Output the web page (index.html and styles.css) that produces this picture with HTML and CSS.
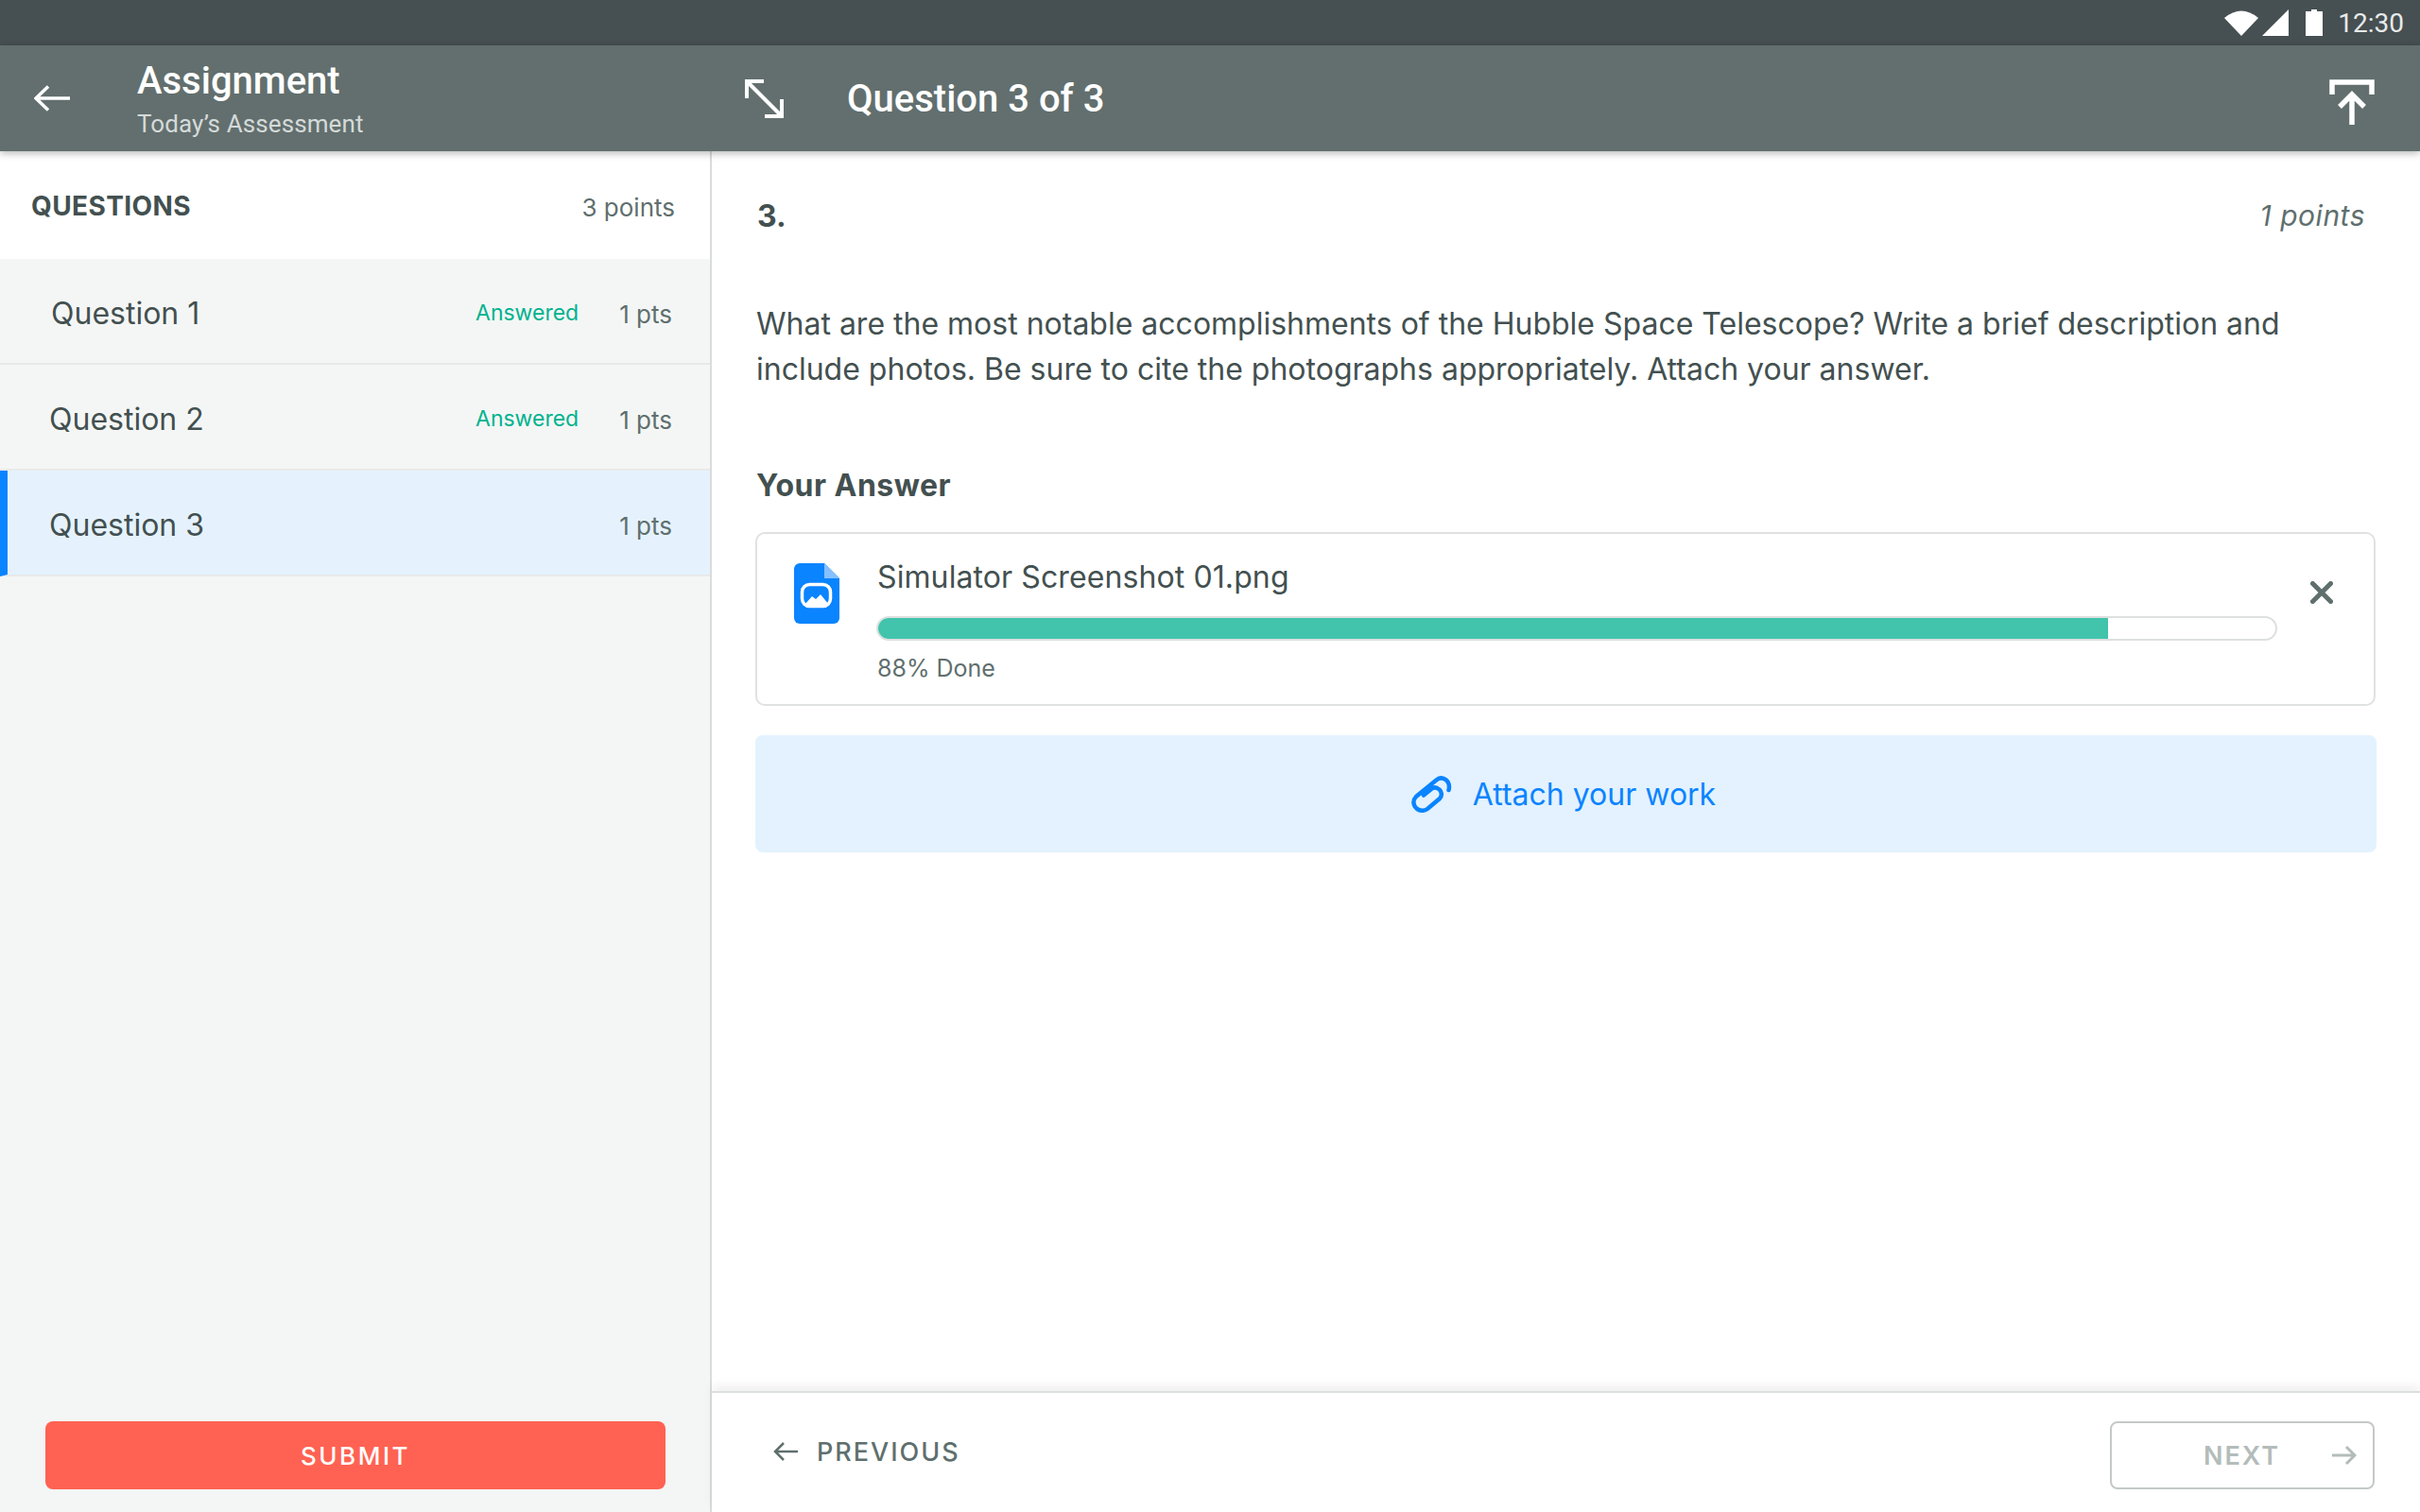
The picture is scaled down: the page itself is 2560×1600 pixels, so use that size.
FILE: index.html
```html
<!DOCTYPE html>
<html lang="en">
<head>
    <meta charset="UTF-8">
    <title>Assignment</title>
    <link rel="stylesheet" href="styles.css">
</head>
<body>
    <div class="status-bar">
        <svg class="st-wifi" width="36" height="28" viewBox="0 0 36 28"><path d="M0 9 Q18 -6 36 9 L18 28Z" fill="#fff"/></svg>
        <svg class="st-signal" width="28" height="28" viewBox="0 0 28 28"><path d="M0 28 L28 0 V28Z" fill="#fff"/></svg>
        <svg class="st-battery" width="18" height="28" viewBox="0 0 18 28"><path d="M0 2 H6 V0 H12 V2 H18 V28 H0Z" fill="#fff"/></svg>
        <span class="st-time">12:30</span>
    </div>
    <header class="app-bar">
        <div class="bar-left">
            <svg class="back" width="38" height="28" viewBox="0 0 38 28"><path d="M38 14 H3 M15 1.500 L2 14 L15 26.500" fill="none" stroke="#fff" stroke-width="3.500"/></svg>
            <div class="bar-titles">
                <div class="bar-title">Assignment</div>
                <div class="bar-sub">Today’s Assessment</div>
            </div>
        </div>
        <div class="bar-right">
            <svg class="expand" width="41" height="41" viewBox="0 0 41 41"><path d="M3 3 L38 38 M2 20 V2 H20 M39 21 V39 H21" fill="none" stroke="#fff" stroke-width="4"/></svg>
            <div class="bar-question">Question 3 of 3</div>
            <svg class="upload" width="48" height="48" viewBox="0 0 48 48"><path d="M3 16 V3 H45 V16 M24 48 V15 M11 29 L24 16 L37 29" fill="none" stroke="#fff" stroke-width="5.500"/></svg>
        </div>
    </header>
    <div class="layout">
        <aside class="sidebar">
            <div class="side-head">
                <span class="side-title">QUESTIONS</span>
                <span class="side-points">3 points</span>
            </div>
            <div class="q-row">
                <span class="q-name q-first">Question 1</span>
                <span class="q-state">Answered</span>
                <span class="q-pts">1 pts</span>
            </div>
            <div class="q-row">
                <span class="q-name">Question 2</span>
                <span class="q-state">Answered</span>
                <span class="q-pts">1 pts</span>
            </div>
            <div class="q-row active">
                <span class="q-name">Question 3</span>
                <span class="q-pts">1 pts</span>
            </div>
            <div class="side-foot">
                <button class="submit">SUBMIT</button>
            </div>
        </aside>
        <main class="content">
            <div class="question">
                <div class="q-head">
                    <span class="q-num">3.</span>
                    <span class="q-value">1 points</span>
                </div>
                <p class="q-text">What are the most notable accomplishments of the Hubble Space Telescope? Write a brief description and include photos. Be sure to cite the photographs appropriately. Attach your answer.</p>
                <h4 class="answer-title">Your Answer</h4>
                <div class="file-card">
                    <svg class="file-icon" width="48" height="64" viewBox="0 0 48 64">
                        <path d="M6 0 H32 L48 16 V58 a6 6 0 0 1 -6 6 H6 a6 6 0 0 1 -6 -6 V6 a6 6 0 0 1 6 -6Z" fill="#0a84ff"/>
                        <path d="M32 0 L48 16 H32Z" fill="#85c1ff"/>
                        <rect x="8.500" y="22.500" width="30" height="23" rx="8" fill="none" stroke="#fff" stroke-width="3.500"/>
                        <path d="M11 44 L19 35 L23 38 L28 33 L37 44Z" fill="#fff"/>
                    </svg>
                    <div class="file-info">
                        <div class="file-name">Simulator Screenshot 01.png</div>
                        <div class="progress"><div class="progress-fill" style="width: 88%"></div></div>
                        <div class="file-done">88% Done</div>
                    </div>
                    <svg class="file-close" width="24" height="24" viewBox="0 0 24 24"><path d="M2.500 2.500 L21.500 21.500 M21.500 2.500 L2.500 21.500" fill="none" stroke="#5f6f6e" stroke-width="5" stroke-linecap="round"/></svg>
                </div>
                <div class="attach">
                    <svg class="clip" width="46" height="40" viewBox="0 0 46 40"><path d="M40.500 16 C42 11 40 5.500 35 3.800 C32 2.800 30 3.500 28 5 L6 23 C2 27 3 33 7 36 C11 38.500 15 38 18 36 L31 25 C34 22 33 17 30 15 C27 13 24 13 22 15 L14 21.500" fill="none" stroke="#0a84ff" stroke-width="4.500" stroke-linecap="round"/></svg>
                    <span>Attach your work</span>
                </div>
            </div>
            <footer class="nav-bar">
                <div class="prev">
                    <svg width="26" height="22" viewBox="0 0 26 22"><path d="M26 11 H2 M11 2 L2 11 L11 20" fill="none" stroke="#5f6f6e" stroke-width="2.500"/></svg>
                    <span>PREVIOUS</span>
                </div>
                <div class="next">
                    <span>NEXT</span>
                    <svg width="26" height="22" viewBox="0 0 26 22"><path d="M0 11 H24 M15 2 L24 11 L15 20" fill="none" stroke="#b3bcba" stroke-width="3"/></svg>
                </div>
            </footer>
        </main>
    </div>
</body>
</html>
```

FILE: styles.css
```css
* { box-sizing: border-box; }
html, body { margin: 0; height: 100%; }
body { width: 2560px; height: 1600px; overflow: hidden; display: flex; flex-direction: column; background: #fff; font-family: Inter, "Liberation Sans", sans-serif; color: #435050; }

.status-bar { height: 48px; flex: none; background: #464f51; display: flex; align-items: center; padding-right: 17px; justify-content: flex-end; }
.st-wifi { margin-right: 4px; }
.st-signal { margin-right: 18px; }
.st-battery { margin-right: 16px; }
.st-time { font-family: Roboto, sans-serif; font-size: 28px; color: #e8eaea; }

.app-bar { height: 112px; flex: none; background: #626f6e; display: flex; position: relative; z-index: 2; box-shadow: 0 2px 8px rgba(0,0,0,.3); color: #fff; font-family: Roboto, sans-serif; }
.bar-left { width: 751px; display: flex; align-items: center; padding-left: 36px; }
.back { margin-right: 71px; }
.bar-title { font-size: 40px; font-weight: 500; line-height: 48px; margin-top: 1px; }
.bar-sub { font-size: 26px; line-height: 32px; margin-top: 5px; color: #d5dad9; letter-spacing: .1px; }
.bar-right { flex: 1; display: flex; align-items: center; padding: 0 48px 0 37px; }
.expand { margin-right: 67px; }
.bar-question { flex: 1; font-size: 40px; font-weight: 500; }
.upload { margin-top: 8px; }

.layout { flex: 1; display: flex; min-height: 0; }

.sidebar { width: 753px; flex: none; display: flex; flex-direction: column; background: #f4f6f5; border-right: 2px solid #d9dcdc; }
.side-head { height: 114px; background: #fff; display: flex; align-items: center; justify-content: space-between; padding: 2px 37px 0 33px; }
.side-title { font-size: 28px; font-weight: 700; letter-spacing: .4px; }
.side-points { font-size: 26px; color: #5f6f6e; padding-top: 2px; }
.q-row { height: 112px; display: flex; align-items: center; padding: 4px 40px 0 52px; border-bottom: 2px solid #e7e9e9; }
.q-row.active { background: #e5f2fd; border-left: 8px solid #0a84ff; padding-left: 44px; }
.q-name { flex: 1; font-size: 32px; }
.q-first { padding-left: 2px; }
.q-state { font-size: 23px; color: #00b28f; margin-right: 43px; }
.q-pts { font-size: 26px; color: #5f6f6e; padding-top: 2px; }
.side-foot { margin-top: auto; padding: 0 47px 24px 48px; }
.submit { width: 100%; height: 72px; border: 0; border-radius: 8px; background: #ff6252; color: #fff; font-family: Inter, sans-serif; font-size: 26px; font-weight: 500; letter-spacing: 2.500px; }

.content { flex: 1; display: flex; flex-direction: column; min-width: 0; }
.question { flex: 1; padding: 0 46px 0 46px; }
.q-head { display: flex; justify-content: space-between; align-items: center; padding: 46px 12px 0 2px; height: 90px; }
.q-num { font-size: 32px; font-weight: 700; }
.q-value { font-size: 30px; font-style: italic; color: #5f6f6e; letter-spacing: .5px; }
.q-text { margin: 69px 0 0; font-size: 32px; line-height: 48px; padding-left: 1px; }
.answer-title { margin: 75px 0 0; font-size: 32px; line-height: 48px; font-weight: 700; padding-left: 1px; letter-spacing: .5px; }
.file-card { margin-top: 25px; width: 1714px; height: 184px; border: 2px solid #e0e2e2; border-radius: 10px; display: flex; padding: 31px 0 0 39px; }
.file-icon { flex: none; margin-right: 39px; }
.file-info { width: 1482px; }
.file-name { font-size: 32px; line-height: 38px; margin: -4px 0 0 1px; letter-spacing: .1px; }
.progress { height: 26px; margin-top: 22px; border: 2px solid #dde0df; border-radius: 13px; overflow: hidden; background: #fff; }
.progress-fill { height: 100%; background: #41c3ac; }
.file-done { font-size: 25px; line-height: 32px; margin: 13px 0 0 1px; color: #5f6f6e; }
.file-close { margin: 19px 0 0 35px; }
.attach { margin-top: 31px; width: 1715px; height: 124px; background: #e3f2fe; border-radius: 8px; display: flex; align-items: center; justify-content: center; gap: 20px; font-size: 32px; padding-right: 6px; color: #0a84ff; }

.nav-bar { height: 128px; flex: none; border-top: 2px solid #dcdfdf; box-shadow: 0 -6px 10px rgba(0,0,0,.06); display: flex; align-items: flex-start; justify-content: space-between; padding: 30px 48px 0 0; }
.prev { display: flex; align-items: center; gap: 20px; margin: 0 0 0 65px; height: 64px; font-size: 27px; font-weight: 500; letter-spacing: 2px; color: #5f6f6e; }
.next { width: 280px; height: 72px; border: 2px solid #c4c8c8; border-radius: 8px; display: flex; align-items: center; padding: 0 17px 0 97px; justify-content: space-between; font-size: 27px; font-weight: 600; letter-spacing: 2px; color: #b3bcba; }
```
